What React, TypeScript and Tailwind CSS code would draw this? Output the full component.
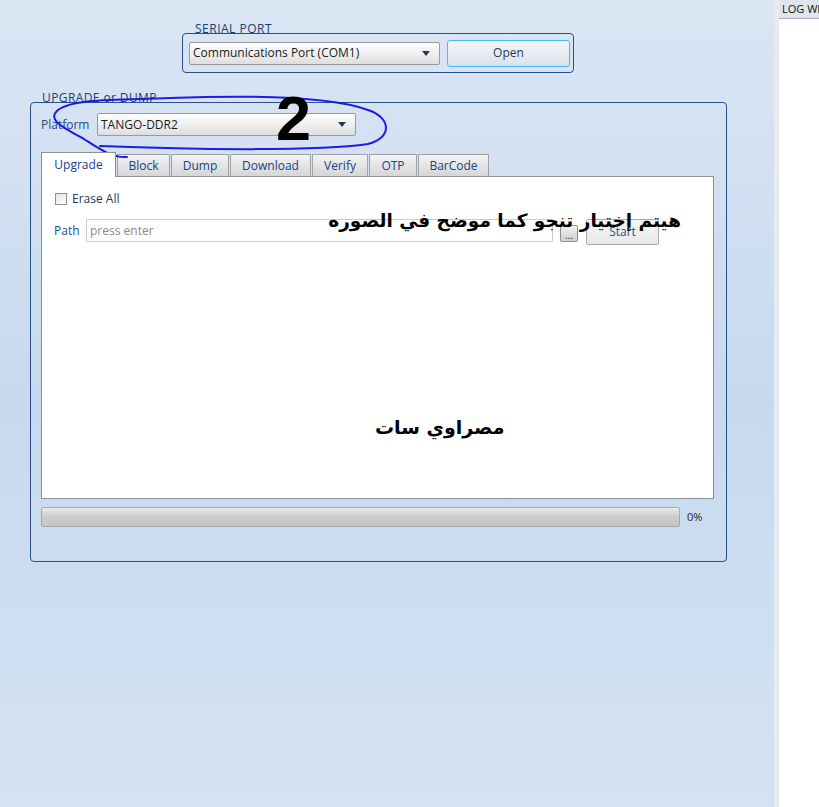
import React from "react";

const ui = { fontFamily: '"Open Sans", "Noto Sans", sans-serif' };
const ar = { fontFamily: '"DejaVu Sans", "Noto Sans", sans-serif' };

function Combo({ text, width }: { text: string; width: number }) {
  return (
    <div
      className="flex items-center justify-between h-[23px] rounded-[2px] border border-[#9a9a9a] bg-gradient-to-b from-[#fdfdfd] via-[#f0f0f0] to-[#dedede] pl-[3px] pr-[9px] text-[12px] text-[#1b1b1b]"
      style={{ width }}
    >
      <span>{text}</span>
      <svg width="8" height="5" viewBox="0 0 8 5">
        <path d="M0 0 H8 L4 5 Z" fill="#1e395b" />
      </svg>
    </div>
  );
}

const tabs = [
  { label: "Block", w: 53 },
  { label: "Dump", w: 58 },
  { label: "Download", w: 81 },
  { label: "Verify", w: 56 },
  { label: "OTP", w: 48 },
  { label: "BarCode", w: 71 },
];

export default function App() {
  return (
    <div className="relative flex w-[819px] h-[807px] overflow-hidden" style={ui}>
      {/* main area */}
      <div className="shrink-0 w-[774px] h-full bg-gradient-to-b from-[#dbe6f4] via-[#c6d9ee] to-[#d4e3f3] flex flex-col">
        {/* serial port */}
        <div className="relative ml-[182px] mt-[33px] w-[392px] h-[40px] rounded-[4px] border border-[#2a4f8c] flex items-center pl-[6px]">
          <span className="absolute left-[12px] -top-[10px] text-[12px] leading-[10px] tracking-[0.5px] text-[#1e3f73]">
            SERIAL PORT
          </span>
          <Combo text="Communications Port (COM1)" width={251} />
          <button className="ml-[7px] w-[123px] h-[27px] rounded-[3px] border border-[#3cc0f2] bg-gradient-to-b from-[#f4f7fa] to-[#d9e2ea] text-[12px] text-[#1e395b]">
            Open
          </button>
        </div>

        {/* upgrade or dump */}
        <div className="relative ml-[30px] mt-[29px] w-[697px] h-[460px] rounded-[4px] border border-[#2a4f8c] pl-[10px] pt-[10px]">
          <span className="absolute left-[11px] -top-[10px] text-[12px] leading-[10px] tracking-[0.4px] text-[#1e3f73]">
            UPGRADE or DUMP
          </span>
          <div className="flex items-center h-[23px]">
            <span className="w-[56px] text-[12px] text-[#1f4a8b]">Platform</span>
            <Combo text="TANGO-DDR2" width={259} />
          </div>

          {/* tabs */}
          <div className="flex items-end h-[24px] mt-[16px]">
            <div className="relative z-10 -mb-px w-[75px] h-[25px] bg-white border border-b-0 border-[#8c8f96] flex items-center justify-center text-[12px] text-[#15428b]">
              Upgrade
            </div>
            {tabs.map((t) => (
              <div
                key={t.label}
                className="h-[22px] ml-px border border-b-0 border-[#9ea3aa] bg-gradient-to-b from-[#f3f3f3] to-[#d6d6d6] flex items-center justify-center text-[12px] text-[#15428b]"
                style={{ width: t.w }}
              >
                {t.label}
              </div>
            ))}
          </div>
          <div className="w-[673px] h-[323px] bg-white border border-[#8c8f96] pl-[12px] pt-[15px]">
            <div className="flex items-center h-[14px]">
              <div className="w-[12px] h-[12px] border border-[#8e8f8f] bg-gradient-to-br from-[#e6e6e6] to-[#ffffff] ml-px" />
              <span className="ml-[5px] text-[12px] text-[#1e395b]">Erase All</span>
            </div>
            <div className="flex items-start mt-[13px]">
              <span className="w-[32px] h-[24px] leading-[24px] text-[12px] text-[#1e4f92]">Path</span>
              <div className="w-[467px] h-[23px] border border-[#c8ccd2] rounded-[1px] bg-white flex items-center pl-[3px] text-[12px] text-[#8a8a8a]">
                press enter
              </div>
              <div className="ml-[7px] mt-[6px] w-[18px] h-[17px] rounded-[2px] border border-[#8e8f8f] bg-gradient-to-b from-[#f2f2f2] to-[#cfcfcf] flex items-end justify-center text-[10px] leading-[12px] text-[#1e395b]">
                ...
              </div>
              <div className="ml-[8px] w-[73px] h-[26px] rounded-[2px] border border-[#a8acb2] bg-gradient-to-b from-[#f6f6f6] to-[#e8e8e8] flex items-center justify-center text-[12px] text-[#1e4f92]">
                Start
              </div>
            </div>
          </div>

          {/* progress */}
          <div className="flex items-center mt-[8px]">
            <div className="w-[639px] h-[20px] rounded-[2px] border border-[#a9a9a9] bg-gradient-to-b from-[#e9e9e9] via-[#cbcbcb] to-[#c6c6c6]" />
            <span className="ml-[7px] text-[11px] text-[#222]">0%</span>
          </div>
        </div>
      </div>

      {/* separator strip */}
      <div className="shrink-0 w-[5px] h-full bg-[#e7ebf0]" />

      {/* log window */}
      <div className="flex-1 min-w-0 h-full bg-white flex flex-col">
        <div className="h-[19px] bg-[#dfe5ec] border-b border-[#a6adb8] flex items-center pl-[3px] text-[11px] text-[#111] whitespace-nowrap overflow-hidden">
          LOG WI
        </div>
      </div>

      {/* annotations */}
      <svg className="absolute left-0 top-0 pointer-events-none" width="819" height="807">
        <path
          d="M127 157 C112 158 98 148 84 139 C64 128 46 120 58 110 C74 98 120 100 170 98 C250 95 330 96 368 110 C392 118 392 138 368 144 C320 151 200 150 100 146"
          fill="none"
          stroke="#1c1ce6"
          strokeWidth="2"
          strokeLinecap="round"
        />
      </svg>
      <div
        className="absolute left-[276px] top-[87px] text-[63px] leading-[63px] font-bold text-black"
        style={{ fontFamily: '"Liberation Sans", Arial, sans-serif' }}
      >
        2
      </div>
      <div
        dir="rtl"
        className="absolute right-[138px] top-[208px] text-[18.5px] leading-[26px] font-bold text-black whitespace-nowrap"
        style={ar}
      >
        هيتم إختيار تنجو كما موضح في الصوره
      </div>
      <div
        dir="rtl"
        className="absolute left-[375px] top-[414px] text-[19px] leading-[26px] font-bold text-black whitespace-nowrap"
        style={ar}
      >
        مصراوي سات
      </div>
    </div>
  );
}
